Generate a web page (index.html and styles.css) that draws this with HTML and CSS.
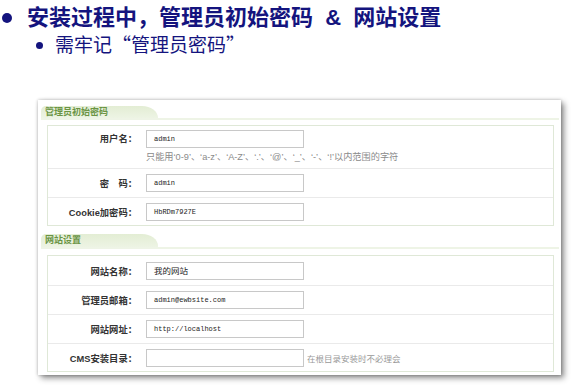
FILE: index.html
```html
<!DOCTYPE html>
<html lang="zh">
<head>
<meta charset="utf-8">
<link rel="stylesheet" href="styles.css">
</head>
<body>
<div class="title"><span class="dot"></span><span>安装过程中，管理员初始密码&nbsp; &amp; &nbsp;网站设置</span></div>
<div class="sub"><span class="dot2"></span><span>需牢记<span class="q">“</span>管理员密码<span class="q">”</span></span></div>
<div class="shot">
  <div class="sec-head"><div class="tab">管理员初始密码</div></div>
  <div class="fs fs1">
    <div class="row r-tall">
      <div class="lab">用户名：</div>
      <div class="field">
        <div class="inp mono">admin</div>
        <div class="hint">只能用‘0-9’、‘a-z’、‘A-Z’、‘.’、‘@’、‘_’、‘-’、‘!’以内范围的字符</div>
      </div>
    </div>
    <div class="row r29">
      <div class="lab">密　码：</div>
      <div class="field"><div class="inp mono">admin</div></div>
    </div>
    <div class="row r28">
      <div class="lab">Cookie加密码：</div>
      <div class="field"><div class="inp mono">HbRDm7927E</div></div>
    </div>
  </div>
  <div class="sec-head sec2"><div class="tab">网站设置</div></div>
  <div class="fs fs2">
    <div class="row r29">
      <div class="lab">网站名称：</div>
      <div class="field"><div class="inp cjk">我的网站</div></div>
    </div>
    <div class="row r29">
      <div class="lab">管理员邮箱：</div>
      <div class="field"><div class="inp mono">admin@ewbsite.com</div></div>
    </div>
    <div class="row r29">
      <div class="lab">网站网址：</div>
      <div class="field"><div class="inp mono">http://localhost</div></div>
    </div>
    <div class="row r28">
      <div class="lab">CMS安装目录：</div>
      <div class="field inline"><div class="inp"></div><span class="hint2">在根目录安装时不必理会</span></div>
    </div>
  </div>
</div>
</body>
</html>
```
FILE: styles.css
```css
html, body {
  margin: 0;
  padding: 0;
  background: #ffffff;
}
body {
  width: 575px;
  height: 386px;
  overflow: hidden;
  font-family: "Liberation Sans", "Noto Sans CJK SC", sans-serif;
}
.title {
  display: flex;
  align-items: center;
  margin-top: 5px;
  height: 26px;
  padding-left: 2px;
  gap: 15px;
  font-size: 22px;
  line-height: 26px;
  font-weight: bold;
  color: #14147e;
  white-space: nowrap;
}
.dot {
  width: 10px;
  height: 10px;
  border-radius: 50%;
  background: #14147e;
  flex: none;
}
.sub {
  display: flex;
  align-items: center;
  height: 20px;
  margin-top: 4px;
  padding-left: 36px;
  gap: 12px;
  font-size: 19px;
  line-height: 20px;
  color: #14147e;
  white-space: nowrap;
}
.q {
  font-family: "Noto Sans CJK SC", sans-serif;
}
.dot2 {
  width: 7px;
  height: 7px;
  border-radius: 50%;
  background: #14147e;
  flex: none;
}
.shot {
  box-sizing: border-box;
  margin: 45px 0 0 38px;
  width: 523px;
  height: 275px;
  padding: 6px 2px 0 3px;
  background: #ffffff;
  box-shadow: 3px 3px 6px rgba(0, 0, 0, 0.45), 0 0 3px rgba(0, 0, 0, 0.25);
}
.sec-head {
  display: flex;
  border-bottom: 2px solid #eef4e6;
}
.sec2 {
  margin-top: 8px;
}
.tab {
  box-sizing: border-box;
  width: 117px;
  height: 12px;
  padding-left: 4px;
  background: linear-gradient(#e3edd4, #edf4e4);
  border-top-left-radius: 5px;
  border-top-right-radius: 16px 12px;
  font-size: 9px;
  line-height: 12px;
  font-weight: bold;
  color: #6a9444;
}
.sec2 .tab {
  height: 13px;
  line-height: 13px;
}
.fs {
  margin: 5px 0 0 6px;
  width: 507px;
  box-sizing: border-box;
  border: 1px solid #dfe8d7;
}
.fs2 {
  margin-top: 6px;
}
.row {
  box-sizing: border-box;
  display: grid;
  grid-template-columns: 89px 158px;
  column-gap: 9px;
  align-items: center;
  border-top: 1px solid #eaeaea;
}
.row:first-child {
  border-top: none;
}
.r-tall {
  height: 42px;
  align-items: start;
  padding-top: 4px;
}
.r-tall .lab {
  line-height: 18px;
}
.r29 { height: 29px; }
.r28 { height: 28px; }
.lab {
  text-align: right;
  font-size: 9.3px;
  font-weight: bold;
  color: #333333;
  white-space: nowrap;
}
.field {
  display: flex;
  flex-direction: column;
}
.field.inline {
  flex-direction: row;
  align-items: center;
  gap: 3px;
}
.inp {
  box-sizing: border-box;
  width: 158px;
  height: 18px;
  flex: none;
  border: 1px solid #c8c8c8;
  padding-left: 7px;
  font-size: 7px;
  line-height: 16px;
  color: #222222;
  white-space: nowrap;
}
.mono {
  font-family: "Liberation Mono", monospace;
}
.cjk {
  font-size: 8.5px;
}
.hint {
  margin-top: 4px;
  font-size: 9.2px;
  line-height: 10px;
  color: #8a8a8a;
  white-space: nowrap;
}
.hint2 {
  font-size: 8.5px;
  color: #999999;
  white-space: nowrap;
}
```
